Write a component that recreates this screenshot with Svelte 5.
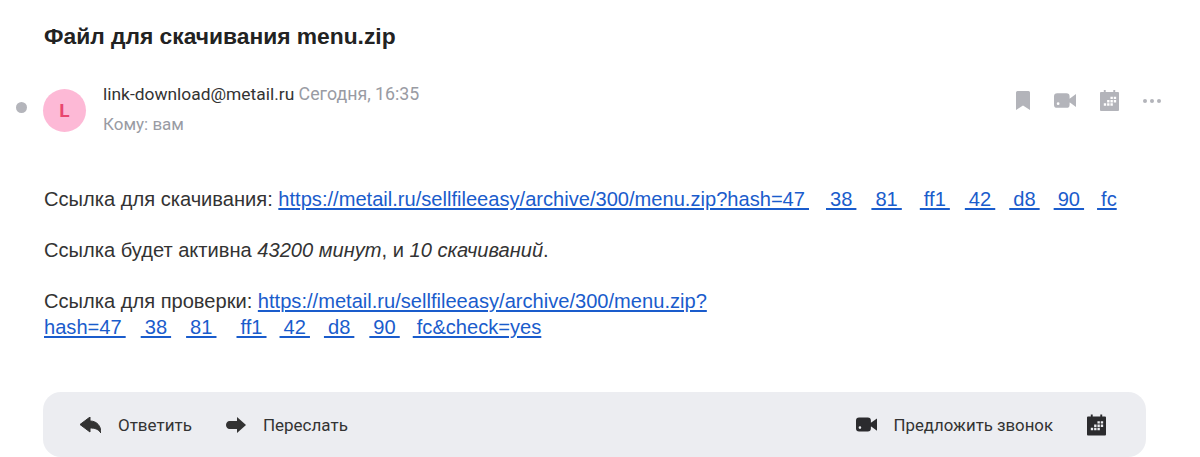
<script>
  const thin = '\u2009';
  const row1 = [['38', 17], ['81', 15], ['ff1', 18], ['42', 15], ['d8', 14], ['90', 14], ['fc', 13]];
  const row2 = [['38', 15], ['81', 15], ['ff1', 20], ['42', 13], ['d8', 14], ['90', 15], ['fc&check=yes', 13]];
</script>

<main class="mail">
  <h1>Файл для скачивания menu.zip</h1>

  <header class="meta">
    <span class="dot"></span>
    <span class="avatar">L</span>
    <div class="who">
      <div class="line"><span class="from">link-download@metail.ru</span> <span class="muted date">Сегодня, 16:35</span></div>
      <div class="line to muted">Кому: вам</div>
    </div>
    <div class="tools">
      <svg viewBox="0 0 14 19" width="14" height="19"><path d="M1.500 0h11A1.500 1.500 0 0 1 14 1.500V19l-7-4.500L0 19V1.500A1.500 1.500 0 0 1 1.500 0z" fill="#b3b4ba"/></svg>
      <svg viewBox="0 0 24 16" width="22" height="15"><path fill-rule="evenodd" d="M3.500 0h10A3.500 3.500 0 0 1 17 3.500v9a3.500 3.500 0 0 1-3.500 3.500h-10A3.500 3.500 0 0 1 0 12.500v-9A3.500 3.500 0 0 1 3.500 0zm1 10a1.500 1.500 0 1 0 0 3 1.500 1.500 0 0 0 0-3zM17 6l7-5v14l-7-5z" fill="#b3b4ba"/></svg>
      <svg viewBox="0 0 20 22" width="19" height="21"><path fill-rule="evenodd" d="M4 0h2v2h8V0h2v2h3a1 1 0 0 1 1 1v18a1 1 0 0 1-1 1H1a1 1 0 0 1-1-1V3a1 1 0 0 1 1-1h3zM11 7v2.500h2.500V7zm3.500 0v2.500H17V7zM7.500 10.500V13H10v-2.500zm3.500 0V13h2.500v-2.500zm3.500 0V13H17v-2.500zM4 14v2.500h2.500V14zm3.500 0v2.500H10V14zm3.500 0v2.500h2.500V14z" fill="#b3b4ba"/></svg>
      <svg viewBox="0 0 18 4" width="18" height="4"><circle cx="2" cy="2" r="2" fill="#b3b4ba"/><circle cx="9" cy="2" r="2" fill="#b3b4ba"/><circle cx="16" cy="2" r="2" fill="#b3b4ba"/></svg>
    </div>
  </header>

  <section class="body">
    <p>Ссылка для скачивания: <a href="#a">https://metail.ru/sellfileeasy/archive/300/menu.zip?hash=47{thin}</a>{#each row1 as [text, gap], i}<span class="gap" style="width: {gap}px"></span><a href="#a">{thin}{text}{i < row1.length - 1 ? thin : ''}</a>{/each}</p>
    <p>Ссылка будет активна <em>43200 минут</em>, и <em>10 скачиваний</em>.</p>
    <p>Ссылка для проверки: <a href="#b">https://metail.ru/sellfileeasy/archive/300/menu.zip?</a><br /><a href="#b">hash=47{thin}</a>{#each row2 as [text, gap], i}<span class="gap" style="width: {gap}px"></span><a href="#b">{thin}{text}{i < row2.length - 1 ? thin : ''}</a>{/each}</p>
  </section>

  <footer class="bar">
    <button class="act">
      <svg viewBox="0 0 21 16" width="21" height="16"><path d="M10 0 0 7.500 10 15v-4c5 0 8 1 11 5 0-7-4-12-11-12z" fill="#333" stroke="#333" stroke-linejoin="round"/></svg>
      Ответить
    </button>
    <button class="act">
      <svg viewBox="0 0 20 16" width="20" height="16"><path d="M11 0l9 8-9 8v-4H3.500C1.500 12 0 10 0 8s1.500-4 3.500-4H11z" fill="#333"/></svg>
      Переслать
    </button>
    <span class="grow"></span>
    <button class="act call">
      <svg viewBox="0 0 24 16" width="21" height="15"><path fill-rule="evenodd" d="M3.500 0h10A3.500 3.500 0 0 1 17 3.500v9a3.500 3.500 0 0 1-3.500 3.500h-10A3.500 3.500 0 0 1 0 12.500v-9A3.500 3.500 0 0 1 3.500 0zm1 10a1.500 1.500 0 1 0 0 3 1.500 1.500 0 0 0 0-3zM17 6l7-5v14l-7-5z" fill="#2b2b2e"/></svg>
      Предложить звонок
    </button>
    <svg class="cal" viewBox="0 0 20 22" width="19" height="22"><path fill-rule="evenodd" d="M4 0h2v2h8V0h2v2h3a1 1 0 0 1 1 1v18a1 1 0 0 1-1 1H1a1 1 0 0 1-1-1V3a1 1 0 0 1 1-1h3zM11 7v2.500h2.500V7zm3.500 0v2.500H17V7zM7.500 10.500V13H10v-2.500zm3.500 0V13h2.500v-2.500zm3.500 0V13H17v-2.500zM4 14v2.500h2.500V14zm3.500 0v2.500H10V14zm3.500 0v2.500h2.500V14z" fill="#2b2b2e"/></svg>
  </footer>
</main>

<style>
  :global(body) { margin: 0; background: #fff; }
  .mail {
    position: relative;
    width: 1200px;
    height: 457px;
    box-sizing: border-box;
    padding: 23px 39px 0 44px;
    font-family: "Liberation Sans", Arial, sans-serif;
    color: #333;
    overflow: hidden;
  }
  h1 {
    margin: 0;
    font-size: 22.800px;
    line-height: 26px;
    font-weight: 700;
    color: #222;
  }
  .meta {
    display: flex;
    align-items: flex-start;
    margin-top: 34px;
    position: relative;
  }
  .dot {
    position: absolute;
    left: -28px;
    top: 19px;
    width: 11px;
    height: 11px;
    border-radius: 50%;
    background: #b4b5bb;
  }
  .avatar {
    width: 43px;
    height: 43px;
    margin: 6px 0 0 -1px;
    border-radius: 50%;
    background: #fdb9d6;
    color: #e8476f;
    font: 700 19px/43px Roboto, sans-serif;
    text-align: center;
  }
  .who { margin: -1px 0 0 17px; font-family: Roboto, sans-serif; font-size: 17.400px; }
  .line { line-height: 24px; height: 24px; white-space: nowrap; }
  .line.to { margin-top: 6px; font-size: 17px; }
  .from { color: #333; }
  .muted { color: #999ba3; }
  .date { font-size: 17.800px; }
  .tools {
    margin-left: auto;
    display: flex;
    align-items: center;
    gap: 24px;
    margin-top: 7px;
  }
  .body {
    margin-top: 50px;
    font-size: 20.100px;
    line-height: 26px;
    color: #333;
  }
  p { margin: 0 0 25px; white-space: nowrap; }
  p:last-child { margin-bottom: 0; }
  a { color: #1a5ccc; text-decoration: underline; text-underline-offset: 2px; }
  .gap { display: inline-block; }
  .bar {
    position: absolute;
    left: 43px;
    top: 392px;
    width: 1103px;
    height: 65px;
    box-sizing: border-box;
    display: flex;
    align-items: center;
    gap: 34px;
    padding: 0 40px 0 37px;
    background: #ecedf1;
    border-radius: 18px;
  }
  .grow { flex: 1; }
  .act {
    display: flex;
    align-items: center;
    gap: 17px;
    border: 0;
    padding: 0;
    background: none;
    color: #333;
    font: 400 17px/24px Roboto, sans-serif;
  }
  .act.call { font-size: 16.800px; }
  .cal { flex: none; }
</style>
